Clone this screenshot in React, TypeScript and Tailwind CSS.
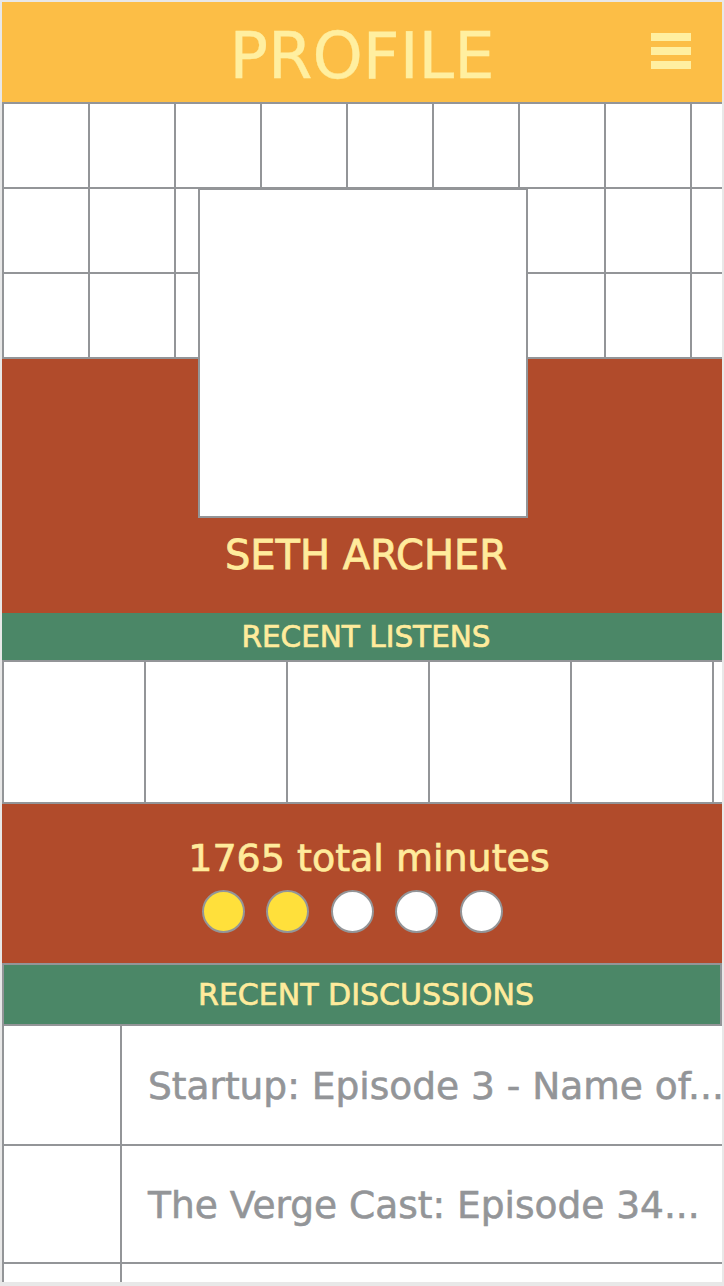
import React from "react";

const font = { fontFamily: '"DejaVu Sans", "Liberation Sans", sans-serif' };

function GridCell() {
  return <div className="h-[85px] w-[86px] border-b-2 border-r-2 border-[#939598] bg-white" />;
}

function Circle({ filled }: { filled: boolean }) {
  return (
    <div
      className={
        "h-[43px] w-[43px] rounded-full border-2 border-[#939598] " +
        (filled ? "bg-[#FFE03B]" : "bg-white")
      }
    />
  );
}

function DiscussionRow({ title, h }: { title: string; h: string }) {
  return (
    <div className={"flex border-b-2 border-[#939598] " + h}>
      <div className="w-[120px] shrink-0 border-l-2 border-r-2 border-[#939598] bg-white" />
      <div className="flex min-w-0 flex-1 items-center overflow-hidden pl-[26px] pt-[3px]">
        <span className="whitespace-nowrap text-[37.5px] leading-none text-[#939598] [-webkit-text-stroke-width:0.6px]">
          {title}
        </span>
      </div>
    </div>
  );
}

export default function App() {
  return (
    <div
      className="box-border h-[1286px] w-[724px] overflow-hidden border-2 border-b-4 border-[#e8e8e8] bg-white"
      style={font}
    >
      {/* Header */}
      <div className="relative flex h-[100px] items-center justify-center bg-[#FCBE46] pt-[7px]">
        <span className="text-[64px] leading-none text-[#FFEFA0] [-webkit-text-stroke-width:0.3px]">PROFILE</span>
        <div className="absolute right-[31px] top-[31px] flex flex-col gap-[6px]">
          <div className="h-[8px] w-[40px] bg-[#FFEFA0]" />
          <div className="h-[8px] w-[40px] bg-[#FFEFA0]" />
          <div className="h-[8px] w-[40px] bg-[#FFEFA0]" />
        </div>
      </div>

      {/* Cover grid + name */}
      <div className="relative">
        <div className="overflow-hidden">
          <div className="grid w-max grid-cols-[repeat(9,86px)] border-l-2 border-t-2 border-[#939598]">
            {Array.from({ length: 27 }).map((_, i) => (
              <GridCell key={i} />
            ))}
          </div>
        </div>
        <div className="flex h-[254px] justify-center bg-[#B14B2B] pl-[8px] pt-[176px]">
          <span className="text-[40px] leading-none text-[#FFEB9C] [-webkit-text-stroke-width:0.8px]">SETH ARCHER</span>
        </div>
        <div className="absolute left-[196px] top-[86px] h-[330px] w-[330px] border-2 border-[#939598] bg-white" />
      </div>

      {/* Recent listens */}
      <div className="flex h-[47px] items-center justify-center bg-[#4B8767] pl-[8px] pt-[2px]">
        <span className="text-[29.5px] leading-none text-[#FFEB9C] [-webkit-text-stroke-width:0.7px]">RECENT LISTENS</span>
      </div>
      <div className="overflow-hidden">
        <div className="flex w-max border-l-2 border-t-2 border-[#939598]">
          {Array.from({ length: 6 }).map((_, i) => (
            <div key={i} className="h-[142px] w-[142px] border-b-2 border-r-2 border-[#939598] bg-white" />
          ))}
        </div>
      </div>

      {/* Minutes */}
      <div className="flex h-[159px] flex-col items-center bg-[#B14B2B] pt-[35px]">
        <span className="pl-[14px] text-[38px] leading-none text-[#FFEB9C] [-webkit-text-stroke-width:0.7px]">
          1765 total minutes
        </span>
        <div className="mr-[20px] mt-[13px] flex gap-[21.5px]">
          <Circle filled />
          <Circle filled />
          <Circle filled={false} />
          <Circle filled={false} />
          <Circle filled={false} />
        </div>
      </div>

      {/* Recent discussions */}
      <div className="flex h-[63px] items-center justify-center border-2 border-[#939598] bg-[#4B8767] pl-[8px]">
        <span className="text-[30px] leading-none text-[#FFEB9C] [-webkit-text-stroke-width:0.7px]">RECENT DISCUSSIONS</span>
      </div>
      <DiscussionRow h="h-[120px]" title="Startup: Episode 3 - Name of..." />
      <DiscussionRow h="h-[118px]" title="The Verge Cast: Episode 34..." />
      <DiscussionRow h="h-[118px]" title="" />
    </div>
  );
}
